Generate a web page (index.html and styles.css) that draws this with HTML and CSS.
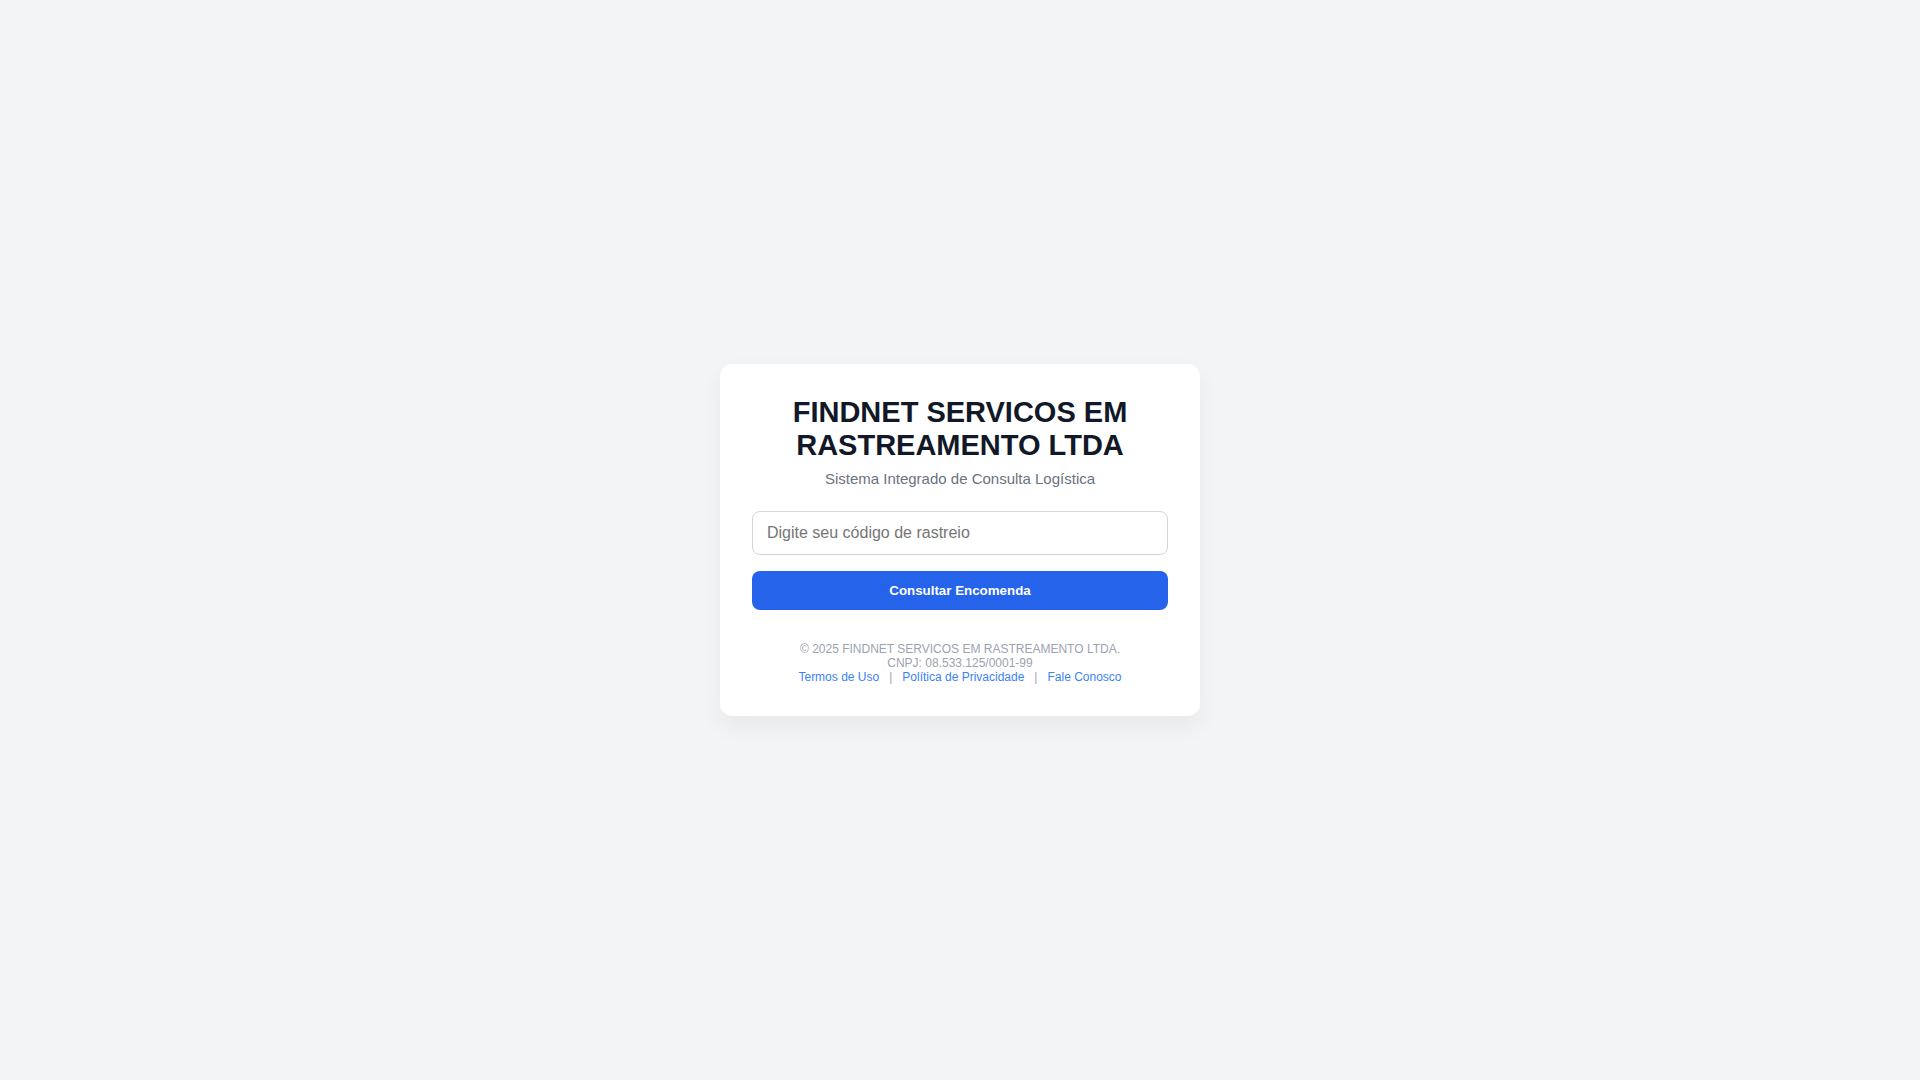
FILE: index.html
```html
<!DOCTYPE html>
<html lang="pt-BR">
<head>
    <meta charset="UTF-8">
    <meta name="viewport" content="width=device-width, initial-scale=1.0">
    <title>FINDNET - Rastreamento</title>
    <link rel="stylesheet" href="styles.css">
</head>
<body>

    <main class="container">
        <h1>FINDNET SERVICOS EM RASTREAMENTO LTDA</h1>
        <p class="subtitle">Sistema Integrado de Consulta Logística</p>

        <form class="tracking-form">
            <input type="text" id="codigo" placeholder="Digite seu código de rastreio" aria-label="Código de rastreio" required>
            <button type="submit">Consultar Encomenda</button>
        </form>

        <footer>
            © 2025 FINDNET SERVICOS EM RASTREAMENTO LTDA.<br>
            CNPJ: 08.533.125/0001-99<br>
            <a href="#">Termos de Uso</a> &nbsp;&nbsp;|&nbsp;&nbsp;
            <a href="#">Política de Privacidade</a> &nbsp;&nbsp;|&nbsp;&nbsp;
            <a href="#">Fale Conosco</a>
        </footer>
    </main>

</body>
</html>
```
FILE: styles.css
```css
* {
    box-sizing: border-box;
}

body {
    margin: 0;
    min-height: 100vh;
    display: flex;
    justify-content: center;
    align-items: center;
    background: #f3f4f6;
    font-family: "Liberation Sans", Arial, sans-serif;
}

.container {
    background: #ffffff;
    width: 100%;
    max-width: 480px;
    padding: 32px;
    border-radius: 12px;
    box-shadow: 0 10px 25px rgba(0, 0, 0, 0.05);
    text-align: center;
}

h1 {
    margin: 0 0 8px;
    font-size: 29px;
    color: #111827;
}

.subtitle {
    margin: 0 0 24px;
    font-size: 15px;
    color: #6b7280;
}

.tracking-form input {
    display: block;
    width: 100%;
    padding: 12px 14px;
    margin-bottom: 16px;
    border: 1px solid #d1d5db;
    border-radius: 8px;
    font-family: inherit;
    font-size: 16px;
}

.tracking-form button {
    display: block;
    width: 100%;
    padding: 12px;
    background: #2563eb;
    color: #ffffff;
    border: none;
    border-radius: 8px;
    font-family: inherit;
    font-weight: bold;
    cursor: pointer;
}

.tracking-form button:hover {
    background: #1d4ed8;
}

footer {
    margin-top: 32px;
    font-size: 12px;
    color: #9ca3af;
}

footer a {
    color: #3b82f6;
    text-decoration: none;
}

footer a:hover {
    text-decoration: underline;
}
```
